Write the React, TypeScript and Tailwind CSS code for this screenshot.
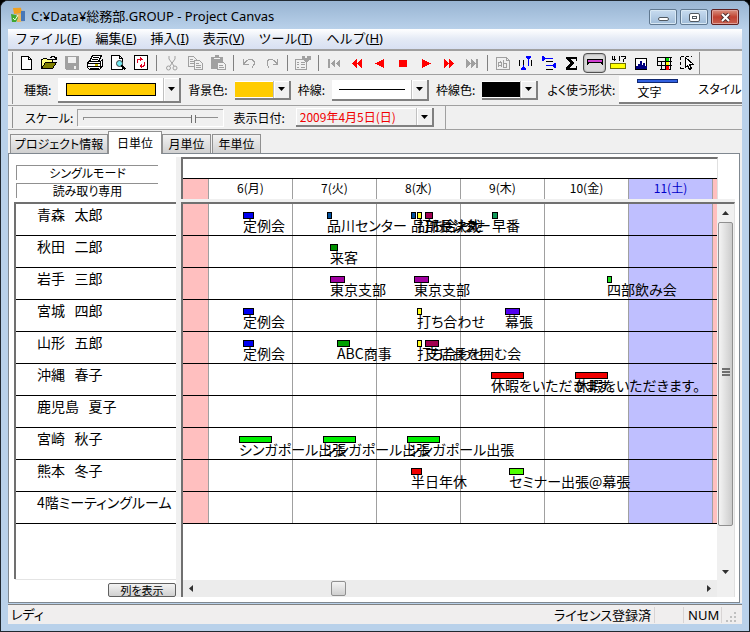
import React from 'react';

type EventItem = { x: number; w: number; color: string; text: string };
type Member = { name: string; events: EventItem[] };

const ev = (x: number, w: number, color: string, text: string): EventItem => ({ x, w, color, text });

const members: Member[] = [
  {
    name: '青森   太郎',
    events: [
      ev(60, 11, '#0000f0', '定例会'),
      ev(144, 5, '#0050a0', '品川センター'),
      ev(228, 5, '#0050a0', '品川センター'),
      ev(234, 5, '#ffff20', '打ち合わせ'),
      ev(242, 8, '#a00050', '部長決裁'),
      ev(309, 6, '#109858', '早番'),
    ],
  },
  { name: '秋田   二郎', events: [ev(147, 8, '#009000', '来客')] },
  {
    name: '岩手   三郎',
    events: [
      ev(147, 15, '#a000a0', '東京支部'),
      ev(231, 15, '#a000a0', '東京支部'),
      ev(424, 5, '#20e020', '四部飲み会'),
    ],
  },
  {
    name: '宮城   四郎',
    events: [
      ev(60, 11, '#0000f0', '定例会'),
      ev(234, 5, '#ffff20', '打ち合わせ'),
      ev(322, 15, '#5000f0', '幕張'),
    ],
  },
  {
    name: '山形   五郎',
    events: [
      ev(60, 11, '#0000f0', '定例会'),
      ev(154, 13, '#00a000', 'ABC商事'),
      ev(234, 5, '#ffff20', '打ち合わせ'),
      ev(242, 14, '#a00050', '支店長を囲む会'),
    ],
  },
  {
    name: '沖縄   春子',
    events: [ev(308, 33, '#f00000', '休暇をいただきます。'), ev(392, 33, '#f00000', '休暇をいただきます。')],
  },
  { name: '鹿児島   夏子', events: [] },
  {
    name: '宮崎   秋子',
    events: [
      ev(56, 33, '#00f000', 'シンガポール出張'),
      ev(140, 33, '#00f000', 'シンガポール出張'),
      ev(224, 33, '#00f000', 'シンガポール出張'),
    ],
  },
  {
    name: '熊本   冬子',
    events: [ev(228, 11, '#f00000', '半日年休'), ev(326, 15, '#50ff00', 'セミナー出張@幕張')],
  },
  { name: '4階ミーティングルーム', events: [] },
];

const days = ['6(月)', '7(火)', '8(水)', '9(木)', '10(金)', '11(土)'];

function DayCells({ labels }: { labels?: boolean }) {
  return (
    <>
      <div className="w-[25px] shrink-0 bg-[#ffbfbf]" />
      {days.map((d, i) => (
        <div
          key={d}
          className={`flex w-[84px] shrink-0 items-center justify-center border-l border-[#a0a0a0] pb-[2px] ${i === 5 ? 'bg-[#bfbfff] text-[#0000c8]' : 'bg-white'}`}
        >
          {labels ? d : null}
        </div>
      ))}
      <div className="flex-1 border-l border-[#a0a0a0] bg-[#ffbfbf]" />
    </>
  );
}

function Icon({ children }: { children: React.ReactNode }) {
  return (
    <svg width="18" height="18" viewBox="0 0 18 18" shapeRendering="crispEdges" fill="none" aria-hidden="true">
      {children}
    </svg>
  );
}

const G = '#a0a0a0';

const groups: { name: string; icon: React.ReactNode }[][] = [
  [
    {
      name: '新規作成',
      icon: <path d="M4.500 2.500h7l3 3v10h-10zM11.500 2.500v3h3" stroke="#000" fill="#fff" />,
    },
    {
      name: '開く',
      icon: (
        <>
          <path d="M1.500 14.500v-9h1l1-1h3l1 1h5v3" stroke="#000" fill="#ffff80" />
          <path d="M1.500 14.500l4-6h11l-4 6z" stroke="#000" fill="#808000" />
          <path d="M10 3.500h1v-1h3v1h1v1h1v1M13 5.500h4M16.500 3v3" stroke="#000" />
        </>
      ),
    },
    {
      name: '保存',
      icon: (
        <>
          <path d="M2 2h14v14H3l-1-1z" fill={G} />
          <path d="M5 3h8v6H5zM11 12h2v3h-2z" fill="#f0f0f0" />
        </>
      ),
    },
    {
      name: '印刷',
      icon: (
        <>
          <path d="M6.500 1.500h9l-3 6h-9z" fill="#fff" stroke="#000" />
          <path d="M7 3.500h6M6 5.500h6" stroke="#000" />
          <path d="M1.500 8.500l2-1h11l2-2v6l-3 4h-10l-2-2z" fill="#fff" stroke="#000" />
          <path d="M2 9.500h12M2 12.500h12M4 14.500h9M14.500 8v6M16 8.500v4" stroke="#000" />
          <path d="M9 10h3v2H9z" fill="#d0c000" />
        </>
      ),
    },
    {
      name: '印刷プレビュー',
      icon: (
        <>
          <path d="M2.500 1.500h8l3 3v11h-11zM10.500 1.500v3h3" fill="#fff" stroke="#000" />
          <circle cx="10.500" cy="9.500" r="3" fill="#70e8f0" stroke="#404040" shapeRendering="auto" />
          <path d="M12.500 11.500l4 4" stroke="#000" strokeWidth="2" />
        </>
      ),
    },
    {
      name: '更新',
      icon: (
        <>
          <path d="M2.500 1.500h13v14h-13z" fill="#fff" stroke="#000" />
          <path d="M5.500 9v-3l1-1h4M8.500 3v4M9.500 4v2M12.500 8v3l-1 1h-4M9.500 10v4M8.500 11v2" stroke="#e00020" />
        </>
      ),
    },
  ],
  [
    {
      name: '切り取り',
      icon: (
        <g stroke={G} shapeRendering="auto">
          <path d="M6 2v3l5 7M12 2v3l-5 7" />
          <circle cx="5.500" cy="14" r="2" />
          <circle cx="12" cy="14" r="2" />
        </g>
      ),
    },
    {
      name: 'コピー',
      icon: (
        <g stroke={G} fill="#f0f0f0">
          <path d="M2.500 2.500h5l3 3v7h-8zM4 5.500h3M4 7.500h4M4 9.500h4" />
          <path d="M8.500 6.500h5l3 3v6h-8zM10 9.500h3M10 11.500h5M10 13.500h5" />
        </g>
      ),
    },
    {
      name: '貼り付け',
      icon: (
        <>
          <path d="M2 3h4V1h4v2h4v12H2z" fill={G} />
          <path d="M5 4.500h6" stroke="#f0f0f0" />
          <path d="M8.500 8.500h6l2 2v5h-8zM10 11.500h4M10 13.500h5" fill="#f0f0f0" stroke={G} />
        </>
      ),
    },
  ],
  [
    { name: '元に戻す', icon: <path d="M3.500 5v5h5M4 9.500l2-2 1-1 2-1h3l2 2v3l-2 3" stroke={G} /> },
    { name: 'やり直し', icon: <path d="M14.500 5v5h-5M14 9.500l-2-2-1-1-2-1H6l-2 2v3l2 3" stroke={G} /> },
  ],
  [
    {
      name: 'プロパティ',
      icon: (
        <>
          <path d="M1.500 5.500h11v10h-11zM3 8.500h2M7 8.500h4M3 10.500h2M7 10.500h4M3 13.500h2M7 13.500h4" stroke={G} />
          <path d="M8 2h3v2h2V2h4v4h-2l-3 3-4-4z" fill={G} />
        </>
      ),
    },
  ],
  [
    { name: '最初へ', icon: <path d="M3 5h2v9H3zM10 5v9L5.500 9.500zM15 5v9l-4.500-4.500z" fill={G} /> },
    { name: '大きく戻る', icon: <path d="M9 5v9L4 9.500zM14 5v9L9 9.500z" fill="#f00" /> },
    { name: '戻る', icon: <path d="M13 5v9L4 9.500z" fill="#f00" /> },
    { name: '今日', icon: <path d="M5 6h8v7H5z" fill="#f00" /> },
    { name: '進む', icon: <path d="M5 5v9l9-4.500z" fill="#f00" /> },
    { name: '大きく進む', icon: <path d="M4 5v9l5-4.500zM9 5v9l5-4.500z" fill="#f00" /> },
    { name: '最後へ', icon: <path d="M13 5h2v9h-2zM3 5v9l4.500-4.500zM8 5v9l4.500-4.500z" fill={G} /> },
  ],
  [
    {
      name: '文字の表示',
      icon: (
        <>
          <path d="M2.500 3.500h10l3 3v9h-13zM12.500 3.500v3h3" stroke={G} />
          <path d="M4.500 13v-4l2-1 1 1v4M5 11.500h2M9.500 6v7h3v-4h-3" stroke={G} />
        </>
      ),
    },
    {
      name: '縦の間隔',
      icon: (
        <>
          <path d="M2.500 6v6M6.500 6v9M14.500 6v6" stroke="#000" />
          <path d="M11.500 3v9M6.500 11v5" stroke="#00f" />
          <path d="M9 2h5v2h-1v1h-3V4H9zM4 16h5v-2H8v-1H5v1H4z" fill="#00f" />
        </>
      ),
    },
    {
      name: '横の間隔',
      icon: (
        <>
          <path d="M6 7.500h7M6 15.500h7" stroke="#000" />
          <path d="M5 4.500h8M6 11.500h9" stroke="#00f" />
          <path d="M2 2h2v1h1v3H4v1H2zM16 9v5h-2v-1h-1v-3h1V9z" fill="#00f" />
        </>
      ),
    },
    {
      name: '合計',
      icon: <path d="M3 3h11v4h-1V5H7l4 4-4 5h6v-2h1v4H3v-2l4-5-4-4z" fill="#000" />,
    },
    {
      name: '帯の表示',
      icon: (
        <>
          <path d="M1 5h16v6h-1v-1h-1V9H3v1H2v1H1z" fill="#000" />
          <path d="M2 6h14v2H2z" fill="#d040d0" />
        </>
      ),
    },
    {
      name: '日付の表示',
      icon: (
        <>
          <path d="M3.500 2v3h3M5.500 2v5M10.500 2v5M12 2.500h4v2l-2 1v2" stroke="#000" />
          <path d="M1.500 9.500h15v5h-15z" fill="#ff0" stroke="#707000" />
        </>
      ),
    },
    {
      name: '山積みグラフ',
      icon: (
        <>
          <path d="M3.500 4.500h11v11h-11z" fill="#fff" stroke="#000" />
          <path d="M4 12h2v-2h2V7h2v4h1V9h2v3h2v3H4z" fill="#000080" />
        </>
      ),
    },
    {
      name: '表の表示',
      icon: (
        <>
          <path d="M2.500 3.500h14M2.500 7.500h14M2.500 11.500h14M5 15.500h11M2.500 3v9M6.500 7v9M10.500 3v13M15.500 3v13" stroke="#000" />
          <path d="M11 4h3v3h-3z" fill="#0d0" />
          <path d="M11 8h3v3h-3z" fill="#ff0" />
          <path d="M11 12h3v4h-3z" fill="#f00" />
        </>
      ),
    },
    {
      name: '範囲選択',
      icon: (
        <>
          <path d="M2.500 2.500h11M2.500 3v12M3 14.500h5" stroke="#000" strokeDasharray="3 2" />
          <path d="M7.500 3.500v10l2-2 2 4 2-1-2-4h4z" fill="#fff" stroke="#000" />
        </>
      ),
    },
  ],
];

function Arrow() {
  return (
    <span className="flex w-4 items-center justify-center border-l border-[#c0c0c0] bg-[#f0f0f0] shadow-[inset_1px_1px_0_#fff]">
      <svg width="7" height="4" viewBox="0 0 7 4" aria-hidden="true">
        <path d="M0 0h7L3.500 4z" fill="#000" />
      </svg>
    </span>
  );
}

function Combo({ label, size, children }: { label: string; size: string; children: React.ReactNode }) {
  return (
    <label className="flex shrink-0 items-center gap-[7px]">
      <span className="whitespace-nowrap">{label}</span>
      <span className={`relative flex border-r-2 border-b-2 border-[#808080] bg-white ${size}`}>
        <select className="absolute inset-0 h-full w-full appearance-none bg-transparent">
          <option />
        </select>
        <span className="pointer-events-none relative flex flex-1 items-center justify-center">{children}</span>
        <span className="pointer-events-none relative flex">
          <Arrow />
        </span>
      </span>
    </label>
  );
}

function Separator() {
  return (
    <div className="flex w-2 shrink-0 justify-center">
      <div className="h-4 w-px bg-[#808080]" />
    </div>
  );
}

const grip = 'border-r border-[#909090] w-[5px] self-stretch my-px shrink-0';

export default function App() {
  return (
    <div className="bg-black">
      <div className="flex min-h-screen flex-col overflow-hidden rounded-t-lg border border-[#202830] bg-[#b9d1ea] px-[7px] pb-[7px] text-xs text-black [font-family:'Noto_Sans_CJK_JP',sans-serif] [font-feature-settings:'palt']">
        <header className="-mx-[7px] flex h-7 shrink-0 items-center bg-linear-to-b from-[#98b4d2] to-[#b9d1ea] pr-[10px] pl-[9px]">
          <svg width="17" height="18" viewBox="0 0 17 18" aria-hidden="true">
            <path d="M3 2l8-1v3l4 1v10l-6 1z" fill="#b8b0a0" />
            <path d="M3 2h8l1 5-8 1z" fill="#f0a020" />
            <path d="M11 5h4v10h-4z" fill="#4878b8" />
            <path d="M7 8h4v8H7z" fill="#e8b860" />
            <path d="M1 8l5 1 2 3-2 4H2z" fill="#40a830" />
            <path d="M3 12l2 2 3-5" stroke="#e8ffe0" fill="none" />
          </svg>
          <h1 className="ml-1 flex-1 pt-1 text-[13px] whitespace-nowrap [font-family:'Noto_Sans','Noto_Sans_CJK_JP',sans-serif]">
            C:¥Data¥総務部.GROUP - Project Canvas
          </h1>
          <div className="flex gap-[3px] pt-1">
            <button aria-label="最小化" className="flex h-4 w-7 items-center justify-center rounded-xs border border-[#607890] bg-linear-to-b from-[#c8dcf0] to-[#a0bcd8] shadow-[inset_0_0_0_1px_#d8e8f4]">
              <span className="mt-1 h-1 w-[11px] rounded-xs border border-[#505860] bg-white" />
            </button>
            <button aria-label="最大化" className="flex h-4 w-7 items-center justify-center rounded-xs border border-[#607890] bg-linear-to-b from-[#c8dcf0] to-[#a0bcd8] shadow-[inset_0_0_0_1px_#d8e8f4]">
              <span className="flex h-[9px] w-[11px] items-center justify-center rounded-xs border border-[#505860] bg-white">
                <span className="h-[3px] w-[5px] border border-[#505860]" />
              </span>
            </button>
            <button aria-label="閉じる" className="flex h-4 w-7 items-center justify-center rounded-xs border border-[#602020] bg-linear-to-b from-[#d89080] via-[#c04030] to-[#c86050] shadow-[inset_0_0_0_1px_#e0a098]">
              <svg width="11" height="9" viewBox="0 0 11 9" aria-hidden="true">
                <path d="M2 1l7 7M9 1L2 8" stroke="#503030" strokeWidth="4" />
                <path d="M2 1l7 7M9 1L2 8" stroke="#fff" strokeWidth="2" />
              </svg>
            </button>
          </div>
        </header>

        <nav className="flex h-5 shrink-0 items-center gap-[14px] bg-linear-to-b from-white via-[#e4eaf5] to-[#d8e0f2] pl-[7px] text-[13px] whitespace-nowrap [font-family:'Noto_Sans','Noto_Sans_CJK_JP',sans-serif] [font-feature-settings:normal]">
          <button>ファイル(<u>F</u>)</button>
          <button>編集(<u>E</u>)</button>
          <button>挿入(<u>I</u>)</button>
          <button>表示(<u>V</u>)</button>
          <button>ツール(<u>T</u>)</button>
          <button>ヘルプ(<u>H</u>)</button>
        </nav>

        <div className="flex h-[26px] shrink-0 items-center border-t-2 border-b border-[#a0a0a0] bg-[#f0f0f0]" role="toolbar">
          <div className={grip} />
          <div className="ml-px flex items-center">
            {groups.map((group, gi) => (
              <React.Fragment key={gi}>
                {gi > 0 && <Separator />}
                {group.map((b) => (
                  <button
                    key={b.name}
                    aria-label={b.name}
                    className={`flex h-5 w-[23px] shrink-0 items-center justify-center ${b.name === '帯の表示' ? 'rounded-sm border border-[#505050] bg-[#dcdcdc] shadow-[inset_0_0_2px_#707070]' : ''}`}
                  >
                    <Icon>{b.icon}</Icon>
                  </button>
                ))}
              </React.Fragment>
            ))}
            <div className="ml-px h-[22px] w-px bg-[#909090]" />
          </div>
        </div>

        <div className="flex h-[31px] shrink-0 items-center gap-[7px] overflow-hidden border-b border-[#a0a0a0] bg-[#f0f0f0]">
          <div className={grip} />
          <div className="ml-1">
            <Combo label="種類:" size="h-[25px] w-[123px]">
              <span className="h-[13px] w-[90px] border border-black bg-[#ffcc00]" />
            </Combo>
          </div>
          <Combo label="背景色:" size="h-[19px] w-14">
            <span className="h-[15px] w-full bg-[#ffcc00]" />
          </Combo>
          <Combo label="枠線:" size="h-[21px] w-[97px]">
            <span className="h-px w-[66px] bg-black" />
          </Combo>
          <Combo label="枠線色:" size="h-[19px] w-14">
            <span className="h-[15px] w-full bg-black" />
          </Combo>
          <div className="ml-[2px] flex flex-1 items-center gap-1">
            <span className="whitespace-nowrap">よく使う形状:</span>
            <div className="flex h-[28px] flex-1 items-center overflow-hidden border-b-2 border-[#808080] bg-white pl-[18px]">
              <button className="flex w-[41px] shrink-0 flex-col items-start">
                <span className="mb-px h-1 w-full border border-[#102870] bg-[#3060e0]" />
                <span className="leading-4">文字</span>
              </button>
              <button className="ml-5 whitespace-nowrap">スタイル</button>
            </div>
          </div>
        </div>

        <div className="flex h-6 shrink-0 items-center border-b border-[#a0a0a0] bg-[#f0f0f0]">
          <div className={grip} />
          <label className="ml-3 flex items-center gap-1">
            <span className="whitespace-nowrap">スケール:</span>
            <input
              type="range"
              defaultValue="83"
              className="h-[17px] w-[146px] appearance-none border-t border-l border-[#a0a0a0] bg-transparent px-[5px] shadow-[1px_1px_0_#fff] [&::-webkit-slider-runnable-track]:h-[3px] [&::-webkit-slider-runnable-track]:border-t [&::-webkit-slider-runnable-track]:border-l [&::-webkit-slider-runnable-track]:border-[#909090] [&::-webkit-slider-thumb]:-mt-[3px] [&::-webkit-slider-thumb]:h-2 [&::-webkit-slider-thumb]:w-[5px] [&::-webkit-slider-thumb]:appearance-none [&::-webkit-slider-thumb]:border-x [&::-webkit-slider-thumb]:border-[#707070] [&::-webkit-slider-thumb]:bg-[#f0f0f0]"
            />
          </label>
          <label className="ml-[10px] flex items-center gap-[11px]">
            <span className="whitespace-nowrap">表示日付:</span>
            <span className="relative flex h-[19px] w-[138px] border-r-2 border-b-2 border-[#808080] shadow-[inset_1px_1px_0_#fff]">
              <select className="min-w-0 flex-1 appearance-none bg-transparent pl-1 text-[#f00000]">
                <option>2009年4月5日(日)</option>
              </select>
              <Arrow />
            </span>
          </label>
          <div className="ml-[11px] h-full w-px bg-[#a0a0a0]" />
        </div>

        <div className="flex h-[23px] shrink-0 items-end bg-[#f0f0f0] pl-[2px] whitespace-nowrap" role="tablist">
          <button role="tab" className="h-[19px] w-[98px] border border-b-0 border-[#909090] bg-linear-to-b from-[#f2f2f2] to-[#d0d0d0] leading-[18px]">
            プロジェクト情報
          </button>
          <button role="tab" aria-selected="true" className="relative z-10 -mb-px h-[23px] w-[54px] border border-b-0 border-[#909090] bg-white leading-5">
            日単位
          </button>
          <button role="tab" className="h-[19px] w-[49px] border border-b-0 border-[#909090] bg-linear-to-b from-[#f2f2f2] to-[#d0d0d0] leading-[18px]">
            月単位
          </button>
          <button role="tab" className="ml-px h-[19px] w-[49px] border border-b-0 border-[#909090] bg-linear-to-b from-[#f2f2f2] to-[#d0d0d0] leading-[18px]">
            年単位
          </button>
        </div>

        <main className="flex flex-1 bg-white">
          <div className="flex flex-1 border border-[#808890] bg-white pt-[3px] pr-1 pb-[5px] pl-[5px]">
            <section className="flex w-[162px] shrink-0 flex-col">
              <div className="flex h-[45px] flex-col gap-[3px] pt-2 pr-[18px] pl-[2px] text-center leading-[14px]">
                <div className="h-[15px] border-t border-l border-[#909090]">シングルモード</div>
                <div className="h-[15px] border-t border-l border-[#909090]">読み取り専用</div>
              </div>
              <ul className="flex-1 border-t-2 border-l-2 border-[#707070] text-sm leading-[21px] shadow-[1px_1px_0_#e4e4e4]">
                {members.map((m) => (
                  <li key={m.name} className="h-8 overflow-hidden border-b border-black pl-[21px] whitespace-pre">
                    {m.name}
                  </li>
                ))}
              </ul>
              <div className="flex h-[18px] items-end justify-end">
                <button className="h-[14px] w-[68px] rounded-xs border border-[#606060] bg-linear-to-b from-[#f4f4f4] to-[#d0d0d0] text-[11px] leading-3">
                  列を表示
                </button>
              </div>
            </section>
            <div className="w-[5px] shrink-0 bg-[#f0f0f0]" />
            <section className="flex min-w-0 flex-1 flex-col">
              <div className="mr-[17px] flex h-[42px] flex-col border-t-2 border-l-2 border-[#707070] border-r border-r-[#e0e0e0]">
                <div className="h-[20px] shrink-0 border-b border-black" />
                <div className="flex h-[20px] shrink-0 overflow-hidden">
                  <DayCells labels />
                </div>
              </div>
              <div className="h-[3px] shrink-0 bg-[#f0f0f0]" />
              <div className="flex flex-1 border-t-2 border-l-2 border-[#707070] border-r border-r-[#e0e0e0]">
                <div className="flex min-w-0 flex-1 flex-col">
                  <div className="flex-1">
                    {members.map((m) => (
                      <div key={m.name} className="relative flex h-8 overflow-hidden border-b border-black">
                        <DayCells />
                        {m.events.map((e) => (
                          <div key={e.x} className="absolute top-2" style={{ left: e.x }}>
                            <div className="h-[7px] border border-black" style={{ width: e.w, backgroundColor: e.color }} />
                            <div className="text-sm leading-3 whitespace-nowrap">{e.text}</div>
                          </div>
                        ))}
                      </div>
                    ))}
                  </div>
                  <div className="flex h-[17px] shrink-0 items-center bg-[#ececec] px-1.5">
                    <svg width="5" height="7" viewBox="0 0 5 7" aria-hidden="true">
                      <path d="M4 0v7L0 3.500z" fill="#303030" />
                    </svg>
                    <div className="flex flex-1 pl-[26%]">
                      <div className="ml-px h-[15px] w-[15px] rounded-xs border border-[#909090] bg-linear-to-b from-[#f4f4f4] to-[#d0d0d0]" />
                    </div>
                    <svg width="5" height="7" viewBox="0 0 5 7" aria-hidden="true">
                      <path d="M1 0v7l4-3.500z" fill="#303030" />
                    </svg>
                  </div>
                </div>
                <div className="flex w-[17px] shrink-0 flex-col items-center bg-[#f0f0f0]">
                  <svg className="my-[7px]" width="7" height="4" viewBox="0 0 7 4" aria-hidden="true">
                    <path d="M0 4h7L3.500 0z" fill="#303030" />
                  </svg>
                  <div className="flex w-[15px] flex-1 flex-col items-center justify-center gap-px rounded-xs border border-[#909090] bg-linear-to-r from-[#f4f4f4] to-[#cccccc] pb-1">
                    <span className="h-[2px] w-2 bg-[#707070]" />
                    <span className="h-[2px] w-2 bg-[#707070]" />
                    <span className="h-[2px] w-2 bg-[#707070]" />
                  </div>
                  <svg className="mt-11 mb-[23px]" width="7" height="4" viewBox="0 0 7 4" aria-hidden="true">
                    <path d="M0 0h7L3.500 4z" fill="#303030" />
                  </svg>
                </div>
              </div>
            </section>
          </div>
          <div className="w-[2px] bg-[#f0f0f0]" />
        </main>

        <footer className="mt-px flex h-5 shrink-0 items-center border-t border-[#808080] bg-[#f0eeee] pl-[3px] text-[13px] whitespace-nowrap [font-family:'Noto_Sans','Noto_Sans_CJK_JP',sans-serif]">
          <span className="flex-1">レディ</span>
          <span className="border-r border-[#d8d4d4] pr-[3px] leading-4">ライセンス登録済</span>
          <span className="h-4 w-[29px] border-r border-[#d8d4d4]" />
          <span className="w-[38px] border-r border-[#d8d4d4] pl-1 leading-4">NUM</span>
          <svg className="mx-1 mt-1" width="12" height="12" viewBox="0 0 12 12" aria-hidden="true">
            <path d="M8 1h2v2H8zM8 5h2v2H8zM8 9h2v2H8zM4 5h2v2H4zM4 9h2v2H4zM0 9h2v2H0z" fill="#c0c0c0" />
          </svg>
        </footer>
      </div>
    </div>
  );
}
